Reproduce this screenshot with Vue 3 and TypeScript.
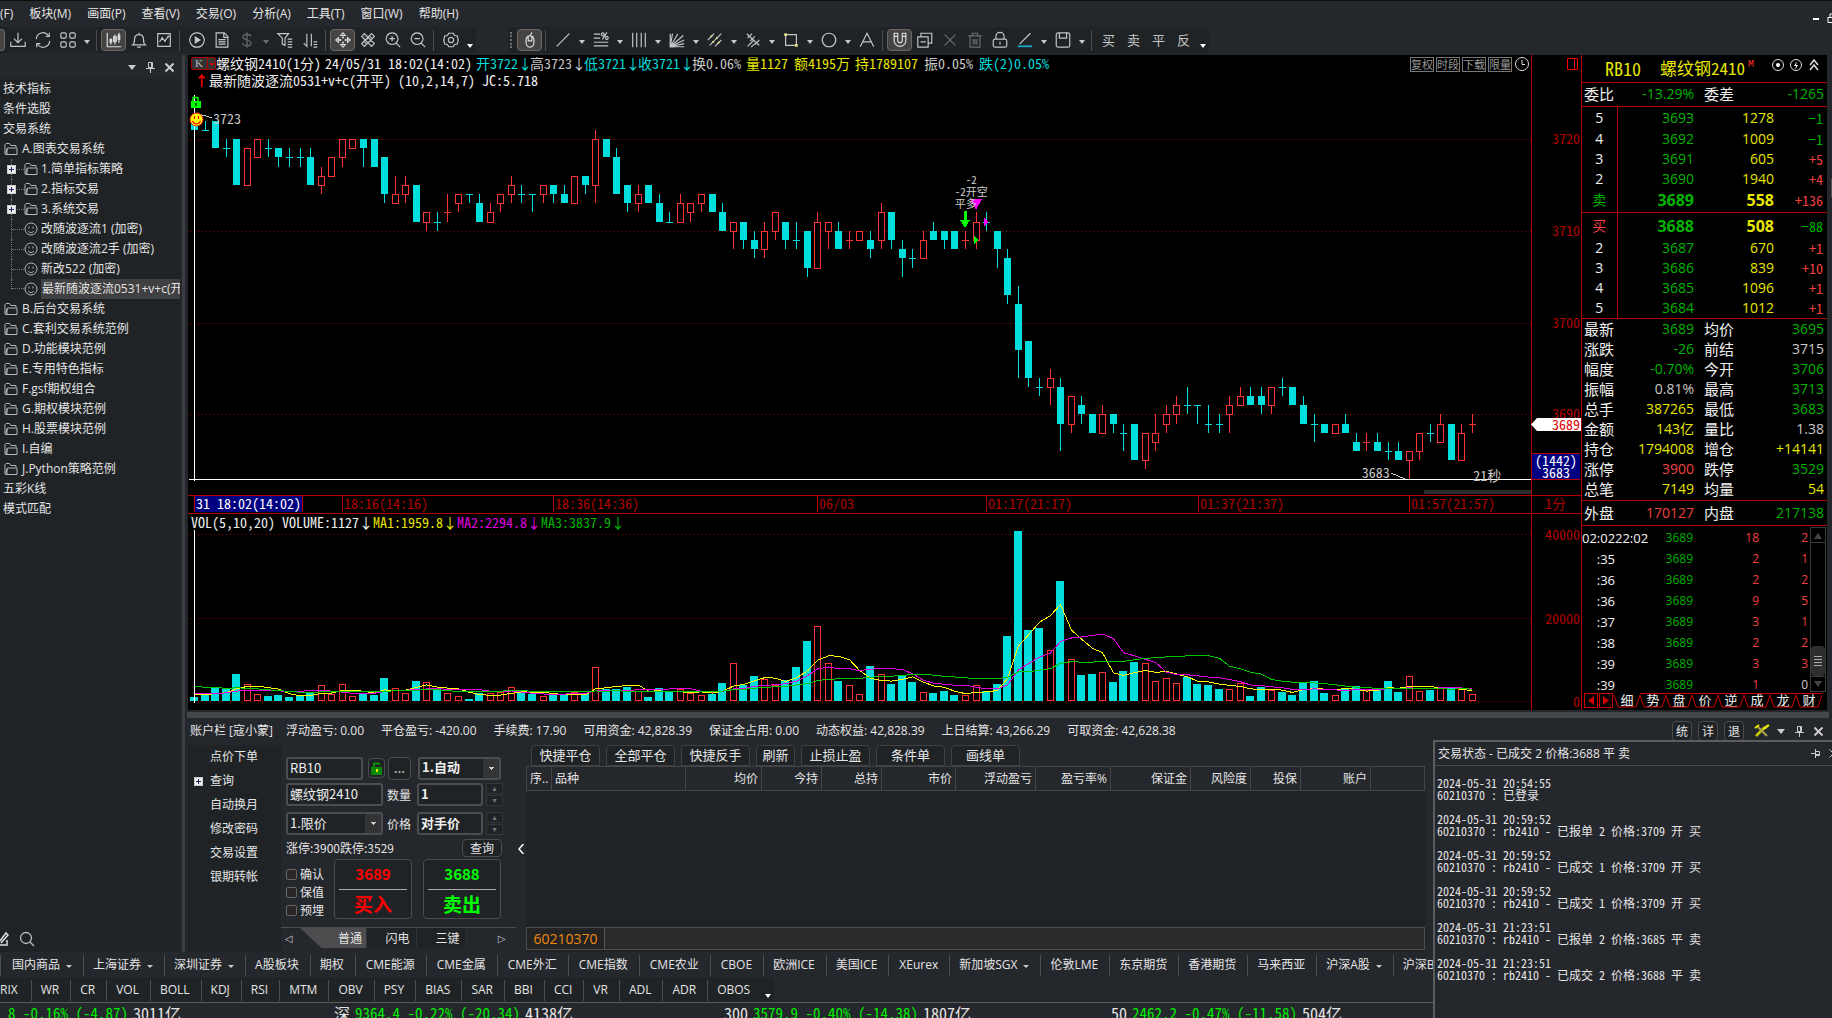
<script setup lang="ts">
import { computed, h, ref } from 'vue'

/* ---------- icons ---------- */
interface Glyph { s?: string; f?: string; a?: string; ac?: string }
const glyphs: Record<string, Glyph> = {
  download: { s: 'M10 2v11M5.500 8.500L10 13l4.500-4.500M2 12v5h16v-5' },
  refresh: { s: 'M2.500 9a7.500 7.500 0 0 1 13.500-4M17 2v4h-4M17.500 11a7.500 7.500 0 0 1-13.500 4M3 18v-4h4' },
  grid: { s: 'M3.500 2h3a1.500 1.500 0 0 1 1.500 1.500v3a1.500 1.500 0 0 1-1.500 1.500h-3a1.500 1.500 0 0 1-1.500-1.500v-3a1.500 1.500 0 0 1 1.500-1.500zM13.500 2h3a1.500 1.500 0 0 1 1.500 1.500v3a1.500 1.500 0 0 1-1.500 1.500h-3a1.500 1.500 0 0 1-1.500-1.500v-3a1.500 1.500 0 0 1 1.500-1.500zM3.500 12h3a1.500 1.500 0 0 1 1.500 1.500v3a1.500 1.500 0 0 1-1.500 1.500h-3a1.500 1.500 0 0 1-1.500-1.500v-3a1.500 1.500 0 0 1 1.500-1.500zM13.500 12h3a1.500 1.500 0 0 1 1.500 1.500v3a1.500 1.500 0 0 1-1.500 1.500h-3a1.500 1.500 0 0 1-1.500-1.500v-3a1.500 1.500 0 0 1 1.500-1.500z' },
  kline: { s: 'M2.500 2v15.500H18M6.500 8v7M11 4v11M15.500 2v11M9.500 6.500h3v5h-3z', f: 'M5 9h3v4H5zM14 4h3v6h-3z' },
  bell: { s: 'M10 2v2M3 15.500h14c-1.500-1-2-3-2-6 0-3.500-2-5.500-5-5.500s-5 2-5 5.500c0 3-.5 5-2 6zM8 18h4' },
  trend: { s: 'M3 3h14v14H3zM5 12l3-4 3 3 4-5', f: 'M7 7h2v2H7zM10 10h2v2h-2zM14 5h2v2h-2z' },
  play: { s: 'M10 2a8 8 0 1 0 .01 0z', f: 'M7.500 5.500v9l7-4.500z' },
  doc: { s: 'M3.500 2h9l4 4v12h-13zM12 2v5h4.500M6 9.500h8M6 12h8M6 14.500h8' },
  dollar: { s: 'M10 1.500v17M14.500 6c-.5-1.500-2-2.300-4.500-2.300S5.500 5 5.500 6.800c0 4 9 2.400 9 6.400 0 2-1.800 3.100-4.500 3.100S5.500 15.200 5 13.500' },
  filter: { s: 'M2 3h12l-4 5v8l-3-1.500V8zM13 9h5M13 12h5M13 15h5M13 18h5' },
  sort: { s: 'M6.500 3v14L3 13.500M11.500 17V3M11.500 3v6M14 12h4M14 15h4M14 18h4' },
  move: { s: 'M10 2L7.500 5h5zM10 18L7.500 15h5zM2 10L5 7.500v5zM18 10L15 7.500v5z', f: 'M9 6h2v2H9zM9 12h2v2H9zM6 9h2v2H6zM12 9h2v2h-2z' },
  hatch: { s: 'M3 6l3-3 11 11-3 3zM17 6l-3-3L3 14l3 3zM6 6l2-2M9 9l2-2M12 12l2-2M8 14l-2-2M14 8l-2-2' },
  zoomin: { s: 'M9 2a6.500 6.500 0 1 0 .01 0zM13.500 13.500L18 18M6 8.500h6M9 5.500v6' },
  zoomout: { s: 'M9 2a6.500 6.500 0 1 0 .01 0zM13.500 13.500L18 18M6 8.500h6' },
  gear: { s: 'M7.500 2.500h5l1.500 2.500 3 .5 1 4.500-1 4.500-3 .5-1.500 2.500h-5L6 15l-3-.5L2 10l1-4.500L6 5zM10 7a3 3 0 1 0 .01 0z' },
  mouse: { s: 'M10 5.500c3 0 4.500 2 4.500 6s-1.500 6.500-4.500 6.500-4.500-2.500-4.500-6.500 1.500-6 4.500-6zM8 6v5h4V6M10 5.500c0-2 2-1.500 2-4' },
  line: { s: 'M3 17L17 3' },
  percent: { s: 'M2 3.500h7M2 8h7M2 12.500h16M2 16.500h16M16.500 1.500l-5 8M12 2a1.500 1.800 0 1 0 .01 0zM16.500 6a1.500 1.800 0 1 0 .01 0z' },
  bars: { s: 'M3 2v16M7.500 2v16M12.500 2v16M17 2v16' },
  fan: { s: 'M2.500 3v14.500H18M2.500 17.500L5 3M2.500 17.500L11 3M2.500 17.500L17 5M2.500 17.500L18 10M2.500 17.500L18 14', f: 'M2 13l5 5H2z' },
  channel: { s: 'M2 10l7-7M4 16L17 3M10 17l7-7', a: 'M7 11h2v2H7zM11 7h2v2h-2zM5 5h2v2H5zM13 12h2v2h-2z', ac: '#e6e08a' },
  pitch: { s: 'M3 3l14 13M4 8l5-5M7 11l5-5M4 17l7-7M8 18l4-4M12 15l5-5' },
  rect: { s: 'M4 4h12v12H4z', a: 'M2.500 2.500h3v3h-3zM14.500 14.500h3v3h-3z', ac: '#e6e08a' },
  circle: { s: 'M10 2.500a7.500 7.500 0 1 0 .01 0z' },
  letter: { s: 'M2.500 17.500L10 2.500l7.500 15M5.500 12h9' },
  magnet: { s: 'M3.500 2.500h4v8a2.500 2.500 0 0 0 5 0v-8h4v8a6.500 6.500 0 0 1-13 0zM3.500 6h4M12.500 6h4' },
  copy: { s: 'M2 6.500h11.500V18H2zM5.500 6.500V2.500h12v11h-4M5 12h6' },
  cross: { s: 'M4 4l12 12M16 4L4 16' },
  trash: { s: 'M2.500 5.500h15M7 5V2.500h6V5M4.500 5.500V18h11V5.500M8 9v6M10 9v6M12 9v6' },
  lock: { s: 'M4.500 9h11a2 2 0 0 1 2 2v5a2 2 0 0 1-2 2h-11a2 2 0 0 1-2-2v-5a2 2 0 0 1 2-2zM5.500 9V6a4.500 4.500 0 0 1 9 0v3M10 12v3' },
  angle: { s: 'M4 14.500L16 2.500', a: 'M2 16h16v2H2z', ac: '#19a9c4' },
  save: { s: 'M4.500 2h11a2 2 0 0 1 2 2v12a2 2 0 0 1-2 2h-11a2 2 0 0 1-2-2V4a2 2 0 0 1 2-2zM6 2v6h8V2' },
}
const Icon = (p: { n: string; size?: number }) => {
  const g = glyphs[p.n]
  const k = p.size ?? 18
  return h('svg', { width: k, height: k, viewBox: '0 0 20 20', 'aria-hidden': 'true' }, [
    g.s ? h('path', { d: g.s, fill: 'none', stroke: 'currentColor', 'stroke-width': 1.3 }) : null,
    g.f ? h('path', { d: g.f, fill: 'currentColor' }) : null,
    g.a ? h('path', { d: g.a, fill: g.ac }) : null,
  ])
}
Icon.props = ['n', 'size']

interface Tool { n?: string; t?: string; c?: boolean; on?: boolean; dim?: boolean; sep?: boolean; low?: boolean }
const sep: Tool = { sep: true }
const tools1: Tool[] = [
  { n: 'download' }, { n: 'refresh' }, { n: 'grid', c: true }, sep,
  { n: 'kline', on: true }, { n: 'bell' }, { n: 'trend' }, sep,
  { n: 'play' }, { n: 'doc' }, { n: 'dollar', c: true, dim: true }, { n: 'filter' }, { n: 'sort' }, sep,
  { n: 'move', on: true }, { n: 'hatch' }, { n: 'zoomin' }, { n: 'zoomout' }, sep,
  { n: 'gear', c: true, low: true },
]
const tools2: Tool[] = [
  { n: 'mouse', on: true }, sep,
  { n: 'line', c: true }, { n: 'percent', c: true }, { n: 'bars', c: true }, { n: 'fan', c: true },
  { n: 'channel', c: true }, { n: 'pitch', c: true }, { n: 'rect', c: true }, { n: 'circle', c: true }, { n: 'letter' }, sep,
  { n: 'magnet', on: true }, { n: 'copy' }, { n: 'cross', dim: true }, { n: 'trash', dim: true }, { n: 'lock' },
  { n: 'angle', c: true }, { n: 'save', c: true }, sep,
  { t: '买' }, { t: '卖' }, { t: '平' }, { t: '反', c: true, low: true },
]
const menus = ['(F)', '板块(M)', '画面(P)', '查看(V)', '交易(O)', '分析(A)', '工具(T)', '窗口(W)', '帮助(H)']

/* ---------- tree ---------- */
interface Node { t: string; k: 'root' | 'dir' | 'sub' | 'leaf'; sel?: boolean }
const tree: Node[] = [
  { t: '技术指标', k: 'root' }, { t: '条件选股', k: 'root' }, { t: '交易系统', k: 'root' },
  { t: 'A.图表交易系统', k: 'dir' },
  { t: '1.简单指标策略', k: 'sub' }, { t: '2.指标交易', k: 'sub' }, { t: '3.系统交易', k: 'sub' },
  { t: '改随波逐流1 (加密)', k: 'leaf' }, { t: '改随波逐流2手 (加密)', k: 'leaf' }, { t: '新改522 (加密)', k: 'leaf' },
  { t: '最新随波逐流0531+v+c(开平)', k: 'leaf', sel: true },
  { t: 'B.后台交易系统', k: 'dir' }, { t: 'C.套利交易系统范例', k: 'dir' }, { t: 'D.功能模块范例', k: 'dir' },
  { t: 'E.专用特色指标', k: 'dir' }, { t: 'F.gsf期权组合', k: 'dir' }, { t: 'G.期权模块范例', k: 'dir' },
  { t: 'H.股票模块范例', k: 'dir' }, { t: 'I.自编', k: 'dir' }, { t: 'J.Python策略范例', k: 'dir' },
  { t: '五彩K线', k: 'root' }, { t: '模式匹配', k: 'root' },
]

/* ---------- price series: r|c, body top, body bottom, high, low (over 3600) ---------- */
const series = `c122,121,123,121 c121,121,122,121 c122,119,122,119 c119,119,120,118 c120,115,120,115 r119,115,119,115 r120,118,120,118 c119,119,120,118
c119,118,119,117 c118,118,119,117 c118,118,119,117 c118,115,119,115 r116,115,117,114 r118,116,118,116 r120,118,120,117 r120,119,120,119
c120,119,120,117 c120,117,120,117 c118,114,118,113 r114,113,116,113 r115,114,116,113 c115,111,115,111 r112,111,112,110 c111,111,112,110
r112,112,114,111 r114,113,114,112 c114,114,114,113 c113,111,114,111 r112,111,113,111 r114,113,114,112 r115,114,116,113 c114,114,115,113
c114,114,114,112 r115,114,115,113 c115,114,115,113 c114,113,115,113 r116,113,116,113 c116,115,116,114 r120,115,121,113 c120,118,120,118
c118,114,119,114 c115,113,115,112 r114,113,115,112 c115,113,115,113 c113,111,114,111 c111,111,112,111 r113,111,114,111 r113,112,113,111
r114,113,114,112 c114,112,114,112 c112,110,113,110 r111,110,111,108 c111,109,111,108 c109,108,110,107 r110,108,111,107 r112,110,112,109
c111,109,111,108 c109,109,111,108 c110,106,110,105 r111,106,112,106 r111,110,111,108 c110,108,111,108 r109,109,110,108 r110,109,110,109
c109,108,110,107 r112,109,113,108 c112,109,112,108 c108,107,109,105 c107,107,108,106 r109,107,110,107 c110,109,111,109 c110,109,110,108
c110,108,110,108 r109,109,110,108 r111,109,112,108 c111,111,112,110 c110,108,110,106 c107,103,108,102 c102,97,104,94 c98,94,98,93
c93,93,94,92 r94,93,95,91 c93,89,94,86 r92,89,92,88 c91,90,92,89 c90,88,90,88 r90,88,91,88 c90,89,90,88
c88,88,89,86 c89,85,89,85 r88,85,88,84 r88,87,90,86 r90,89,91,88 r91,90,92,89 c91,91,93,90 c91,91,91,89
c89,89,91,88 c89,89,90,88 r91,90,92,88 r92,91,93,91 c92,91,93,91 c92,91,93,90 r93,91,93,90 c93,93,94,92
c93,91,93,91 c91,89,92,89 c89,89,90,87 c89,88,89,88 r89,88,89,88 c89,88,90,88 c87,86,88,86 r87,87,88,86
c87,86,88,86 c86,86,87,85 c86,85,87,85 r86,85,86,83 r88,86,88,85 c88,88,89,87 r89,87,90,87 c89,85,89,85
r88,85,89,85 r89,89,90,88`
const cx = (i: number) => Math.round(6 + 10.562 * i)
const py = (p: number) => Math.round(84 + (120 - p) * 9.18)
const candles = series.trim().split(/\s+/).map((s) => {
  const [t, b, hi, lo] = s.slice(1).split(',').map(Number)
  return { up: s[0] === 'r', t: py(t), b: py(b), hi: py(hi), lo: py(lo) }
}).map((k, i) => ({ ...k, x: cx(i) }))
const vols = [4, 6, 13, 13, 27, 17, 7, 5, 6, 4, 6, 9, 16, 7, 17, 5, 7, 6, 23, 13, 8, 20, 19, 12, 8, 5, 2, 8, 8, 9, 14, 9, 7, 5, 6, 6, 9, 8, 34, 12,
  12, 14, 10, 4, 13, 9, 12, 8, 6, 7, 18, 38, 16, 25, 22, 16, 21, 34, 60, 75, 38, 20, 16, 7, 35, 27, 17, 25, 19, 9, 8, 10, 6, 6, 16, 10, 17, 65, 170,
  71, 73, 51, 120, 42, 26, 27, 29, 19, 30, 39, 38, 20, 23, 18, 24, 17, 16, 12, 12, 18, 5, 14, 11, 9, 6, 19, 20, 8, 6, 12, 15, 11, 11, 20, 9, 25, 10,
  11, 13, 13, 12, 7]
const history = [...Array(10).fill(22), ...Array(5).fill(9), ...Array(4).fill(8)]
const average = (n: number) => {
  const all = [...history, ...vols]
  return vols.map((_, i) => {
    const end = i + history.length + 1
    const m = all.slice(end - n, end).reduce((a, b) => a + b, 0) / n
    return `${cx(i) + 0.5},${(187.5 - m).toFixed(1)}`
  }).join(' ')
}
const averages = computed(() => [
  { c: '#ffff00', p: average(5) }, { c: '#e000e0', p: average(10) }, { c: '#00c800', p: average(20) },
])

const quoteLine = [
  { t: '螺纹钢2410(1分)', c: 'w', w: 109 }, { t: '24/05/31 18:02(14:02)', c: 'w', w: 151 },
  { t: '开3722↓', c: 'c', w: 54 }, { t: '高3723↓', c: 'g', w: 54 }, { t: '低3721↓', c: 'c', w: 54 }, { t: '收3721↓', c: 'c', w: 54 },
  { t: '换0.06%', c: 'g', w: 54 }, { t: '量1127', c: 'y', w: 48 }, { t: '额4195万', c: 'y', w: 61 }, { t: '持1789107', c: 'y', w: 69 },
  { t: '振0.05%', c: 'g', w: 55 }, { t: '跌(2)0.05%', c: 'c', w: 70 },
]
const volLine = [
  { t: 'VOL(5,10,20)', c: 'w', w: 91 }, { t: 'VOLUME:1127↓', c: 'w', w: 91 }, { t: 'MA1:1959.8↓', c: 'y', w: 84 },
  { t: 'MA2:2294.8↓', c: 'm', w: 84 }, { t: 'MA3:3837.9↓', c: 'n', w: 84 },
]
const times = ['18:16(14:16)', '18:36(14:36)', '06/03', '01:17(21:17)', '01:37(21:37)', '01:57(21:57)']

/* ---------- quote panel ---------- */
const asks = [['5', '3693', '1278', '−1'], ['4', '3692', '1009', '−1'], ['3', '3691', '605', '+5'], ['2', '3690', '1940', '+4'], ['卖', '3689', '558', '+136']]
const bids = [['买', '3688', '508', '−88'], ['2', '3687', '670', '+1'], ['3', '3686', '839', '+10'], ['4', '3685', '1096', '+1'], ['5', '3684', '1012', '+1']]
const stats = [
  ['最新', '3689', 'n', '均价', '3695', 'n'], ['涨跌', '-26', 'n', '前结', '3715', 'g'], ['幅度', '-0.70%', 'n', '今开', '3706', 'n'],
  ['振幅', '0.81%', 'g', '最高', '3713', 'n'], ['总手', '387265', 'y', '最低', '3683', 'n'], ['金额', '143亿', 'y', '量比', '1.38', 'g'],
  ['持仓', '1794008', 'y', '增仓', '+14141', 'y'], ['涨停', '3900', 'r', '跌停', '3529', 'n'], ['总笔', '7149', 'y', '均量', '54', 'y'],
]
const ticks = [['02:02', '22:02', '18', '2'], [':35', '', '2', '1'], [':36', '', '2', '2'], [':36', '', '9', '5'], [':37', '', '3', '1'], [':38', '', '2', '2'], [':39', '', '3', '3'], [':39', '', '1', '0']]
const quoteTabs = ['细', '势', '盘', '价', '逆', '成', '龙', '财']

/* ---------- account dock ---------- */
const account = ['浮动盈亏: 0.00', '平仓盈亏: -420.00', '手续费: 17.90', '可用资金: 42,828.39', '保证金占用: 0.00', '动态权益: 42,828.39', '上日结算: 43,266.29', '可取资金: 42,628.38']
const dockMenu = ['点价下单', '查询', '自动换月', '修改密码', '交易设置', '银期转帐']
const actions = ['快捷平仓', '全部平仓', '快捷反手', '刷新', '止损止盈', '条件单', '画线单']
const columns = [
  { t: '序..', w: 25 }, { t: '品种', w: 134 }, { t: '均价', w: 76 }, { t: '今持', w: 60 }, { t: '总持', w: 60 }, { t: '市价', w: 74 }, { t: '浮动盈亏', w: 80 },
  { t: '盈亏率%', w: 75 }, { t: '保证金', w: 80 }, { t: '风险度', w: 60 }, { t: '投保', w: 50 }, { t: '账户', w: 70 },
]
const code = ref('RB10')
const contract = ref('螺纹钢2410')
const qty = ref('1')
const price = ref('对手价')
const log = [
  ['2024-05-31 20:54:55', '60210370 : 已登录'],
  ['2024-05-31 20:59:52', '60210370 : rb2410 - 已报单 2 价格:3709 开 买'],
  ['2024-05-31 20:59:52', '60210370 : rb2410 - 已成交 1 价格:3709 开 买'],
  ['2024-05-31 20:59:52', '60210370 : rb2410 - 已成交 1 价格:3709 开 买'],
  ['2024-05-31 21:23:51', '60210370 : rb2410 - 已报单 2 价格:3685 平 卖'],
  ['2024-05-31 21:23:51', '60210370 : rb2410 - 已成交 2 价格:3688 平 卖'],
]
const markets = ['国内商品▾', '上海证券▾', '深圳证券▾', 'A股板块', '期权', 'CME能源', 'CME金属', 'CME外汇', 'CME指数', 'CME农业', 'CBOE', '欧洲ICE', '美国ICE', 'XEurex', '新加坡SGX▾', '伦敦LME', '东京期货', '香港期货', '马来西亚', '沪深A股▾', '沪深B股']
const indicators = ['RIX', 'WR', 'CR', 'VOL', 'BOLL', 'KDJ', 'RSI', 'MTM', 'OBV', 'PSY', 'BIAS', 'SAR', 'BBI', 'CCI', 'VR', 'ADL', 'ADR', 'OBOS']
const indexes = [
  { n: '', v: '8 -0.16% (-4.87)', a: '3011亿' }, { n: '深', v: '9364.4 -0.22% (-20.34)', a: '4138亿' },
  { n: '300', v: '3579.9 -0.40% (-14.38)', a: '1807亿' }, { n: '50', v: '2462.2 -0.47% (-11.58)', a: '504亿' },
]
</script>

<template>
  <div class="app">
    <header class="menubar">
      <nav><a v-for="m in menus" :key="m" href="#">{{ m }}</a></nav>
      <div class="winctl">
        <button aria-label="最小化"><svg width="6" height="3"><rect y="1" width="6" height="2" fill="#fff" /></svg></button>
        <button aria-label="还原"><svg width="6" height="10"><path d="M1 4.500h8M1 4v5.500h8M3 4V1h5" fill="none" stroke="#fff" /></svg></button>
      </div>
    </header>

    <div class="toolbar">
      <div class="strip">
        <span class="stub"></span>
        <template v-for="(t, i) in tools1" :key="i">
          <i v-if="t.sep" class="sep"></i>
          <button v-else class="tool" :class="{ on: t.on, dim: t.dim }" :aria-label="t.n"><Icon :n="t.n!" /></button>
          <i v-if="t.c" class="caret" :class="{ low: t.low, dim: t.dim }"></i>
        </template>
      </div>
      <div class="strip second">
        <i class="grip"></i>
        <template v-for="(t, i) in tools2" :key="i">
          <i v-if="t.sep" class="sep"></i>
          <button v-else class="tool" :class="{ on: t.on, dim: t.dim }" :aria-label="t.n ?? t.t"><Icon v-if="t.n" :n="t.n" /><template v-else>{{ t.t }}</template></button>
          <i v-if="t.c" class="caret" :class="{ low: t.low }"></i>
        </template>
      </div>
    </div>

    <div class="body">
      <aside class="side">
        <div class="side-head">
          <i class="tri"></i>
          <svg class="pin" width="9" height="11"><path d="M2.500 .5h4v5h-4zM0 6.500h9M4.500 7v4M5.500 1v5" /></svg>
          <svg class="pin" width="9" height="9"><path d="M.5 .5l8 8M8.500 .5l-8 8" stroke-width="2" /></svg>
        </div>
        <ul class="tree">
          <li v-for="(n, i) in tree" :key="i" :class="n.k">
            <i v-if="n.k === 'leaf' || n.k === 'sub'" class="branch" :class="{ last: n.sel }"></i>
            <i v-if="n.k === 'sub'" class="plus"></i>
            <svg v-if="n.k === 'dir' || n.k === 'sub'" class="ico" width="14" height="14"><path d="M1 12V2.500L2 1.500h3.500l1.500 2h5v2M1.500 12.500L3.500 6h9.500v6.500zM3 12.500V6.500" /></svg>
            <svg v-else-if="n.k === 'leaf'" class="ico" width="14" height="14"><circle cx="7" cy="7" r="6" /><path d="M5 4.500v2M9 4.500v2M4 9c1.500 2 4.500 2 6 0" /></svg>
            <span :class="{ picked: n.sel }">{{ n.t }}</span>
          </li>
        </ul>
        <div class="side-foot">
          <svg width="9" height="16"><path d="M0 10L6 2l2 2-7 8M0 14h7V9" fill="none" stroke="#ddd" stroke-width="1.500" /></svg>
          <svg width="16" height="16"><circle cx="7" cy="7" r="5.500" fill="none" stroke="#bbb" stroke-width="1.300" /><path d="M11 11l4 4" stroke="#bbb" stroke-width="1.300" /></svg>
        </div>
      </aside>
      <i class="vbar"></i>

      <section class="center">
        <div class="top">
          <div class="chart">
            <div class="price">
              <div class="plot">
                <svg class="canvas" height="440" viewBox="0 0 1343 440" preserveAspectRatio="none" shape-rendering="crispEdges">
                  <line v-for="p in [120, 110, 100, 90]" :key="p" class="grid" x1="2" x2="1343" :y1="py(p) + 0.5" :y2="py(p) + 0.5" />
                  <g v-for="(k, i) in candles" :key="i" :fill="k.up ? '#f33' : '#00dede'">
                    <rect v-if="k.hi < k.t" :x="k.x" :y="k.hi" width="1" :height="k.t - k.hi" />
                    <rect v-if="k.lo > k.b" :x="k.x" :y="k.b" width="1" :height="k.lo - k.b" />
                    <rect v-if="k.t === k.b" :x="k.x - 3" :y="k.t" width="7" height="1" />
                    <rect v-else-if="k.up" :x="k.x - 2.5" :y="k.t + 0.5" width="6" :height="k.b - k.t" fill="#000" stroke="#f33" />
                    <rect v-else :x="k.x - 3" :y="k.t" width="7" :height="k.b - k.t" />
                  </g>
                  <path d="M8 58L24 63M1203 418L1217 424" stroke="#ccc" fill="none" />
                  <rect x="6" y="40" width="1" height="386" fill="#fff" />
                  <rect x="1" y="424" width="1342" height="1" fill="#fff" />
                  <rect x="1236" y="435" width="107" height="4" fill="#2b2b2b" />
                  <path d="M776 156h3v9h3l-5 8-5-8h4zM786 181l5 4-5 4z" fill="#0f0" />
                  <path d="M782 144h12l-6 11zM796 163l5 4-5 4z" fill="#f0f" />
                </svg>
                <svg class="marks" width="18" height="38"><path d="M5 9V3.500h5V9" fill="none" stroke="#0f0" stroke-width="1.500" /><rect x="3" y="7" width="10" height="7" fill="#0f0" /><rect x="7" y="9" width="2" height="3" fill="#060" /><circle cx="8.500" cy="25.500" r="6.500" fill="#ff0" stroke="#f22" /><path d="M6.500 22v3M10.500 22v3M4.500 27c2 4 6 4 8 0" fill="none" stroke="#e00" stroke-width="1.200" /></svg>
                <div class="head">
                  <button class="kbtn">K<i></i></button>
                  <span v-for="q in quoteLine" :key="q.t" :class="q.c" :style="{ width: q.w + 'px' }">{{ q.t }}</span>
                </div>
                <div class="sub-head"><b>↑</b>最新随波逐流0531+v+c(开平) (10,2,14,7) JC:5.718</div>
                <div class="tags">
                  <button>复权</button><button>时段</button><button>下载</button><button>限量</button>
                  <svg width="16" height="16"><circle cx="8" cy="8" r="6.500" fill="none" stroke="#ddd" /><path d="M8 4v4.500h3" fill="none" stroke="#ddd" /></svg>
                </div>
                <span class="lab hi">3723</span>
                <span class="lab lo">3683</span>
                <span class="lab sec">21秒</span>
                <div class="signal"><span>-2</span><span>-2开空</span><span>平多</span></div>
              </div>
              <div class="axis">
                <svg class="win" width="12" height="13"><path d="M.5 .5h10v11h-10zM7.500 1v11" fill="none" stroke="red" /></svg>
                <span class="tick" style="top: 83px">3720</span>
                <span class="tick" style="top: 175px">3710</span>
                <span class="tick" style="top: 267px">3700</span>
                <span class="tick" style="top: 358px">3690</span>
                <span class="now">3689</span>
                <span class="cur"><span>(1442)</span><span>3683</span></span>
              </div>
            </div>
            <div class="timeline">
              <div class="scale">
                <span class="at"><b>31 18:02(14:02)</b></span>
                <span v-for="t in times" :key="t">{{ t }}</span>
              </div>
              <div class="unit">1分</div>
            </div>
            <div class="volume">
              <div class="plot">
                <svg class="canvas" height="196" viewBox="0 0 1343 196" preserveAspectRatio="none" shape-rendering="crispEdges">
                  <line v-for="y in [20.5, 104.5, 187.5]" :key="y" class="grid" x1="2" x2="1343" :y1="y" :y2="y" />
                  <template v-for="(v, i) in vols" :key="i">
                    <rect v-if="candles[i].up" :x="cx(i) - 2.5" :y="187.5 - v" width="6" :height="v - 1" fill="#000" stroke="#f33" />
                    <rect v-else :x="cx(i) - 4" :y="187 - v" width="8" :height="v" fill="#00dede" />
                  </template>
                  <polyline v-for="a in averages" :key="a.c" :points="a.p" fill="none" :stroke="a.c" />
                  <rect x="6" y="16" width="1" height="173" fill="#fff" />
                </svg>
                <div class="vol-head"><span v-for="q in volLine" :key="q.t" :class="q.c" :style="{ width: q.w + 'px' }">{{ q.t }}</span></div>
              </div>
              <div class="axis">
                <span class="tick" style="top: 20px">40000</span>
                <span class="tick" style="top: 104px">20000</span>
                <span class="tick" style="top: 187px">0</span>
              </div>
            </div>
          </div>

          <div class="quote">
            <div class="title">
              <span>RB10</span><span class="nm">螺纹钢2410</span><sup>M</sup>
              <svg width="56" height="16"><g fill="none" stroke="#ddd"><circle cx="8" cy="8" r="5.500" /><circle cx="26" cy="8" r="5.500" /><path d="M40 8l4-5 4 5M40 13l4-5 4 5" stroke-width="1.500" /></g><circle cx="8" cy="8" r="2" fill="#fff" /><path d="M27 4l-3 5h2l-1 4 3-5h-2z" fill="#fff" /></svg>
            </div>
            <table class="stats line"><tbody><tr><th>委比</th><td class="n">-13.29%</td><th>委差</th><td class="n">-1265</td></tr></tbody></table>
            <table class="book"><tbody>
              <tr v-for="r in asks" :key="r[0]" :class="{ best: r[0] === '卖' }"><th class="n">{{ r[0] }}</th><td class="n">{{ r[1] }}</td><td class="y">{{ r[2] }}</td><td class="d" :class="r[3][0] === '+' ? 'r' : 'n'">{{ r[3] }}</td></tr>
            </tbody></table>
            <table class="book buy"><tbody>
              <tr v-for="r in bids" :key="r[0]" :class="{ best: r[0] === '买' }"><th class="r">{{ r[0] }}</th><td class="n">{{ r[1] }}</td><td class="y">{{ r[2] }}</td><td class="d" :class="r[3][0] === '+' ? 'r' : 'n'">{{ r[3] }}</td></tr>
            </tbody></table>
            <table class="stats"><tbody>
              <tr v-for="s in stats" :key="s[0]"><th>{{ s[0] }}</th><td :class="s[2]">{{ s[1] }}</td><th>{{ s[3] }}</th><td :class="s[5]">{{ s[4] }}</td></tr>
            </tbody></table>
            <table class="stats line both"><tbody><tr><th>外盘</th><td class="r">170127</td><th>内盘</th><td class="n">217138</td></tr></tbody></table>
            <div class="tape">
              <table><tbody>
                <tr v-for="(t, i) in ticks" :key="i"><th>{{ t[0] }}</th><th>{{ t[1] }}</th><td class="n p">3689</td><td class="r">{{ t[2] }}</td><td :class="t[3] === '0' ? 'g' : 'r'">{{ t[3] }}</td></tr>
              </tbody></table>
              <div class="scroll"><i class="up"></i><i class="thumb"></i><i class="down"></i></div>
            </div>
            <div class="qtabs">
              <button class="ar" aria-label="向左"><svg width="6" height="9"><path d="M6 0v9L0 4.500z" fill="#c00" /></svg></button>
              <button class="ar" aria-label="向右"><svg width="6" height="9"><path d="M0 0v9l6-4.500z" fill="#c00" /></svg></button>
              <button v-for="(t, i) in quoteTabs" :key="t" class="qt">
                <svg width="30" height="16"><path :d="i ? 'M2 .5h26M2 2l4 12h18L28 2' : 'M2 2l4 12h18L28 2'" fill="none" stroke="#c00" /></svg>{{ t }}
              </button>
            </div>
          </div>
        </div>

        <i class="hbar"></i>
        <div class="account">
          <span class="name">账户栏 [寇小蒙]</span>
          <span v-for="a in account" :key="a">{{ a }}</span>
          <div class="acts">
            <button>统</button><button>详</button><button>退</button>
            <svg width="16" height="14"><path d="M2 12l9-9" stroke="#cc0" stroke-width="2.500" /><path d="M10 4l4-3M4 3l9 9" stroke="#aaa050" stroke-width="2" /><path d="M1 4l4-3M10 5l5-4" stroke="#ee0" stroke-width="2" /></svg>
            <i class="tri"></i>
            <svg class="pin" width="9" height="11"><path d="M2.500 .5h4v5h-4zM0 6.500h9M4.500 7v4M5.500 1v5" /></svg>
            <svg class="pin" width="9" height="9"><path d="M.5 .5l8 8M8.500 .5l-8 8" stroke-width="2" /></svg>
          </div>
        </div>

        <div class="dock">
          <ul class="dmenu"><li v-for="d in dockMenu" :key="d"><i v-if="d === '查询'" class="plus"></i><a href="#">{{ d }}</a></li></ul>
          <form class="order" @submit.prevent>
            <div class="fields">
              <div class="row">
                <input v-model="code" class="code" aria-label="合约代码">
                <button type="button" class="lk" aria-label="锁定"><svg width="14" height="16"><path d="M4 7V3.500h5V5" fill="none" stroke="#0a0" stroke-width="1.500" /><rect x="1" y="7" width="11" height="8" fill="#0a8a0a" /><rect x="6" y="9" width="2" height="3" fill="#ee0" /></svg></button>
                <button type="button" class="more">...</button>
                <span class="sel auto"><select aria-label="开平"><option>1.自动</option></select></span>
              </div>
              <div class="row">
                <input v-model="contract" class="wide" aria-label="合约名称">
                <label for="qty">数量</label><input id="qty" v-model="qty" class="num bold">
                <span class="spin"><button type="button" aria-label="增加">▴</button><button type="button" aria-label="减少">▾</button></span>
              </div>
              <div class="row">
                <span class="sel wide"><select aria-label="委托类型"><option>1.限价</option></select></span>
                <label for="prc">价格</label><input id="prc" v-model="price" class="num bold">
                <span class="spin"><button type="button" aria-label="加价">▴</button><button type="button" aria-label="减价">▾</button></span>
              </div>
              <div class="row limits"><span>涨停:3900跌停:3529</span><button type="button">查询</button></div>
              <div class="row trade">
                <div class="checks">
                  <label><input type="checkbox">确认</label><label><input type="checkbox">保值</label><label><input type="checkbox">预埋</label>
                </div>
                <button type="button" class="deal red"><b>3689</b><i></i><strong>买入</strong></button>
                <button type="button" class="deal green"><b>3688</b><i></i><strong>卖出</strong></button>
              </div>
            </div>
            <div class="otabs">
              <button type="button" class="nav" aria-label="前一页">◁</button>
              <button type="button" class="ot act">普通</button><button type="button" class="ot">闪电</button><button type="button" class="ot">三键</button>
              <button type="button" class="nav end" aria-label="后一页">▷</button>
            </div>
          </form>
          <button class="fold" aria-label="收起"><svg width="6" height="10"><path d="M5.500 0L1 5l4.500 5" fill="none" stroke="#fff" stroke-width="1.500" /></svg></button>
          <div class="positions">
            <div class="pbtns"><button v-for="a in actions" :key="a" :class="{ short: a === '刷新' }">{{ a }}</button></div>
            <table>
              <colgroup><col v-for="c in columns" :key="c.t" :style="{ width: c.w + 'px' }"><col></colgroup>
              <thead><tr><th v-for="c in columns" :key="c.t">{{ c.t }}</th><th></th></tr></thead>
            </table>
            <div class="blank"></div>
            <div class="acct"><button>60210370</button></div>
          </div>
        </div>
      </section>
      <i class="edge"></i>
    </div>

    <nav class="markets">
      <a v-for="m in markets" :key="m" href="#" :class="{ latin: /^[A-Z]{2}/.test(m) }">{{ m.replace('▾', '') }}<i v-if="m.endsWith('▾')"></i></a>
    </nav>
    <nav class="markets inds"><div><a v-for="m in indicators" :key="m" href="#">{{ m }}</a><i class="caret low"></i></div></nav>
    <footer class="indexes">
      <div v-for="x in indexes" :key="x.n"><span v-if="x.n">{{ x.n }}</span><em>{{ x.v }}</em><span>{{ x.a }}</span></div>
    </footer>

    <section class="popup">
      <h2><span>交易状态 - 已成交 2 价格:3688 平 卖</span>
        <svg class="pin" width="9" height="9"><path d="M4.500 2.500h4v4h-4zM4.500 0v9M0 4.500h4M5 5.500h4" /></svg>
        <svg class="pin" width="3" height="9"><path d="M.5 .5l8 8M.5 8.500l8-8" /></svg>
      </h2>
      <div class="log"><p v-for="(l, i) in log" :key="i">{{ l[0] }}<br>{{ l[1] }}</p></div>
    </section>
  </div>
</template>

<style>
body { background: #24272c; }
</style>

<style scoped>
* { box-sizing: border-box; }
.app {
  position: relative; display: flex; flex-direction: column; height: 100vh; overflow: hidden;
  background: #24272c; color: #e4e4e4; font: 12px/16px "Open Sans", "Noto Sans CJK SC", sans-serif; white-space: nowrap;
  --dark: #1f2326; --line: #434446; --red: #b40000;
  --song: "Noto Sans Mono CJK SC", "Liberation Mono", "Noto Sans CJK SC", monospace;
}
button { padding: 0; border: 0; background: none; color: inherit; font: inherit; }
a { color: inherit; text-decoration: none; }
ul, p, h2 { margin: 0; padding: 0; list-style: none; font-weight: 400; }
table { border-collapse: collapse; border-spacing: 0; }
th, td { padding: 0; font-weight: 400; }
i { font-style: normal; }
.w { color: #f0f0f0; } .c { color: #00dede; } .g { color: #c8c8c8; } .y { color: #e6e600; }
.m { color: #e000e0; } .n { color: #00b400; } .r { color: #f04040; }

.menubar { display: flex; justify-content: space-between; height: 27px; border-top: 1px solid #0c0c0c; }
.menubar nav { display: flex; gap: 16px; padding-top: 5px; }
.winctl { display: flex; gap: 8px; align-items: center; padding-top: 8px; overflow: hidden; }
.winctl button { display: flex; }
.winctl button:last-child { width: 5px; overflow: hidden; }

.toolbar { display: flex; gap: 32px; height: 28px; }
.strip { display: flex; align-items: center; height: 26px; background: var(--dark); border-radius: 0 4px 4px 0; }
.second { border-radius: 4px; }
.stub { width: 5px; height: 22px; border: 1px solid #6b6a69; border-left: 0; border-radius: 0 4px 4px 0; background: #464443; }
.tool { display: flex; align-items: center; justify-content: center; width: 25px; height: 22px; color: #c4c6c8; font-size: 13px; }
.on { background: #464443; border: 1px solid #6b6a69; border-radius: 4px; color: #dcdcdc; }
.dim { color: #6a6c6e; }
.sep { width: 1px; height: 21px; margin: 0 4px 0 3px; background: #4b4d50; }
.caret { width: 13px; color: #c8c8c8; }
.caret::after { content: ""; display: block; margin: 3px auto 0 4px; width: 0; border: 3px solid transparent; border-top: 4px solid currentColor; border-bottom: 0; }
.caret.dim { color: #6a6c6e; }
.caret.low::after { margin-top: 12px; border-top-color: #fff; }
.grip { width: 3px; height: 16px; margin: 0 4px 0 2px; border-left: 2px dotted #6d7073; }

.body { position: relative; display: flex; flex: 1; min-height: 0; }
.side { display: flex; flex-direction: column; width: 180px; background: var(--dark); }
.side-head { display: flex; align-items: center; justify-content: flex-end; gap: 10px; height: 24px; padding-right: 6px; background: #24272c; }
.tri { border: 4px solid transparent; border-top: 5px solid #ccc; border-bottom: 0; }
.pin { fill: none; stroke: #ccc; }
.tree { flex: 1; }
.tree li { position: relative; display: flex; align-items: center; height: 20px; padding-left: 3px; overflow: hidden; }
.tree .dir { padding-left: 4px; }
.tree .sub, .tree .leaf { padding-left: 24px; }
.ico { flex: none; margin-right: 3px; fill: none; stroke: #b4b6b8; }
.dir .ico { margin-right: 4px; }
.tree .picked { flex: 1; overflow: hidden; background: #403f41; line-height: 20px; padding-left: 1px; }
.branch { position: absolute; left: 11px; top: 0; width: 12px; height: 20px; border-left: 1px dotted #777; }
.branch.last { height: 10px; }
.branch::after { content: ""; position: absolute; left: 0; top: 10px; width: 12px; border-top: 1px dotted #777; }
.branch.last::after { top: 9px; }
.plus { width: 9px; height: 9px; background: linear-gradient(#226, #226) center / 5px 1px no-repeat, linear-gradient(#226, #226) center / 1px 5px no-repeat, #eee; border: 1px solid #ccc; }
.tree .plus { position: absolute; left: 7px; top: 6px; }
.side-foot { display: flex; gap: 10px; height: 21px; }
.vbar { width: 3px; margin: 0 3px 0 2px; background: #3b3d40; }
.edge { position: absolute; right: 0; top: 124px; width: 1px; height: 18px; background: #555; }

.center { display: flex; flex-direction: column; flex: 1; min-width: 0; }
.top { display: flex; padding-right: 5px; }
.chart { flex: 1; min-width: 0; background: #000; font: 14px/16px var(--song); color: var(--red); }
.price, .volume, .timeline { display: flex; }
.plot { position: relative; flex: 1; min-width: 0; }
.canvas { display: block; width: 100%; }
.grid { stroke: #a00000; stroke-dasharray: 1 3; }
.head, .sub-head, .vol-head { position: absolute; left: 3px; top: 0; display: flex; }
.head span, .vol-head span { flex: none; }
.sub-head { top: 17px; left: 6px; color: #f0f0f0; }
.sub-head b { width: 15px; text-align: center; color: red; }
.kbtn { display: flex; align-items: center; width: 25px; height: 13px; margin: 2px 0 0; padding-left: 3px; border: 1px solid #a00; border-radius: 2px; background: #333; color: #bbb; font: 11px/11px "Liberation Serif", serif; }
.kbtn i { margin-left: 4px; height: 11px; border-left: 1px solid #a00; }
.kbtn i::after { content: ""; display: block; margin: 5px 0 0 1px; border: 3px solid transparent; border-top-color: #c00; border-bottom: 0; }
.tags { position: absolute; right: 1px; top: 1px; display: flex; align-items: center; gap: 2px; }
.tags button { width: 24px; height: 15px; border: 1px solid #777; color: #999; font: 11px/12px "Noto Sans CJK SC", sans-serif; }
.marks { position: absolute; left: 0; top: 39px; }
.lab { position: absolute; color: #c8c8c8; }
.hi { left: 25px; top: 55px; }
.lo { left: 87.4%; top: 409px; }
.sec { left: 95.7%; top: 412px; }
.signal { position: absolute; left: 57.1%; top: 118px; display: flex; flex-direction: column; color: #ccc; font-size: 11px; line-height: 12px; }
.signal span:first-child { padding-left: 11px; }
.axis { position: relative; width: 50px; border-left: 1px solid var(--red); }
.tick { position: absolute; right: 1px; transform: translateY(-50%); }
.win { position: absolute; right: 2px; top: 3px; }
.now { position: absolute; right: 0; top: 363px; width: 50px; height: 13px; padding-right: 1px; background: #fff; color: #e00000; line-height: 12px; text-align: right; clip-path: polygon(0 50%, 12% 0, 100% 0, 100% 100%, 12% 100%); }
.cur { position: absolute; left: 0; top: 398px; display: flex; flex-direction: column; width: 48px; height: 27px; background: #000080; border: solid var(--red); border-width: 1px 0; color: #fff; line-height: 12px; text-align: center; }
.timeline { height: 19px; border: solid var(--red); border-width: 1px 0; line-height: 15px; }
.scale { display: grid; flex: 1; grid-template-columns: 154fr 211fr 264fr 169fr 212fr 211fr 122fr; }
.scale span { border-left: 1px solid var(--red); height: 16px; padding-left: 1px; min-width: 0; }
.scale .at { border: 0; padding-left: 6px; }
.at b { display: inline-block; height: 16px; padding: 0 1px; border: solid var(--red); border-width: 0 1px; background: #000080; color: #fff; font-weight: 400; }
.unit { width: 50px; height: 16px; border-left: 1px solid var(--red); text-align: center; padding-right: 2px; }

.quote { width: 246px; background: #000; border-left: 1px solid var(--red); font: 14px/20px "Open Sans", "Noto Sans CJK SC", sans-serif; }
.quote table { width: 100%; table-layout: fixed; }
.title { display: flex; height: 28px; padding: 3px 0 0 23px; border-bottom: 1px solid var(--red); color: #e6e600; font: 18px/20px var(--song); }
.title .nm { margin-left: 19px; font-size: 17px; }
.title sup { width: 9px; margin-left: 3px; color: #f33; font: 10px/14px "Liberation Mono", monospace; }
.title svg { margin-left: 13px; margin-top: -1px; }
.stats th { width: 46px; padding-left: 2px; text-align: left; font: 15px/20px "Noto Sans CJK SC", sans-serif; color: #f0f0f0; }
.stats th:first-child + td { width: 66px; }
.stats th:nth-child(3) { width: 56px; padding-left: 10px; }
.stats td { text-align: right; }
.stats td:last-child { padding-right: 3px; }
.stats.line { border-bottom: 1px solid var(--red); }
.stats.line tr { height: 23px; }
.stats.both { border-top: 1px solid var(--red); margin-top: 1px; }
.stats.both tr { height: 25px; }
.book { border-bottom: 1px solid var(--red); }
.book tr { height: 20px; }
.book tr:first-child { height: 22px; }
.book .best { height: 24px; }
.book.buy .best { height: 25px; }
.book.buy tr:last-child { height: 19px; }
.book tr.best td { font-weight: 700; font-size: 16px; }
.book th { width: 35px; border-right: 1px solid var(--red); color: #f0f0f0; }
.book .best th.n { color: #00b400; } .book .best th.r { color: #f04040; }
.book td { width: 77px; text-align: right; }
.book td + td { width: 80px; }
.book tr td.d, .book tr.best td.d { width: auto; padding-right: 4px; font: 14px/20px var(--song); }
.tape { display: flex; height: 166px; padding-top: 1px; }
.tape table { flex: 1; font-size: 12px; height: 168px; }
.tape tr { height: 21px; }
.tape th { width: 33px; text-align: right; color: #f4f4f4; font-size: 13px; }
.tape td { text-align: right; width: 66px; }
.tape td.p { width: 45px; }
.tape td:last-child { width: auto; }
.scroll { display: flex; flex-direction: column; width: 16px; margin: 0 1px 0 2px; border: 1px solid #3a3a3a; }
.scroll .up, .scroll .down { height: 15px; border-bottom: 1px solid #3a3a3a; }
.scroll .down { border: solid #3a3a3a; border-width: 1px 0 0; }
.scroll .up::after { content: ""; display: block; margin: 5px 0 0 3px; width: 0; border: 4px solid transparent; border-bottom: 6px solid #444; border-top: 0; }
.scroll .down::after { content: ""; display: block; margin: 4px 0 0 3px; width: 0; border: 4px solid transparent; border-top: 6px solid #444; border-bottom: 0; }
.scroll .thumb { height: 30px; margin-top: auto; border-radius: 4px; background: repeating-linear-gradient(#aaa 0 1px, transparent 1px 3px) center / 8px 10px no-repeat, #2e2e2e; }
.qtabs { display: flex; align-items: center; height: 17px; padding-left: 2px; }
.ar { display: flex; align-items: center; justify-content: center; width: 14px; height: 15px; margin-right: 1px; border: 1px solid #c00; }
.qt { position: relative; width: 26px; height: 16px; font-size: 13px; line-height: 15px; color: #f0f0f0; text-align: center; }
.qt svg { position: absolute; left: -2px; top: 0; }

.hbar { height: 6px; margin: 2px 3px 0 -1px; background: #464748; }
.account { display: flex; align-items: center; gap: 17px; height: 26px; padding: 0 9px 0 2px; }
.account .name { margin-right: -4px; }
.acts { display: flex; align-items: center; gap: 6px; margin-left: auto; }
.acts button { width: 20px; height: 20px; border: 1px solid #4a4b4d; border-radius: 4px; background: var(--dark); line-height: 17px; }
.acts > svg { margin-left: 4px; }
.acts .tri { margin-left: 1px; }

.dock { display: flex; flex: 1; min-height: 0; padding: 1px 407px 0 0; }
.dmenu { width: 93px; background: var(--dark); line-height: 24px; }
.dmenu li { display: flex; align-items: center; padding-left: 22px; }
.dmenu .plus { margin: 0 7px 0 -16px; }
.order { display: flex; flex-direction: column; width: 235px; }
.fields { flex: 1; padding: 11px 0 0 5px; font: 13px/16px "Noto Sans CJK SC", sans-serif; }
.row { display: flex; align-items: center; height: 29px; }
.row:first-child { height: 24px; }
.order input:not([type=checkbox]), select { height: 23px; padding: 0 2px 2px; border: 2px solid #4d4d4f; border-radius: 3px; background: var(--dark); color: #eee; font: 13px/16px "Noto Sans CJK SC", sans-serif; outline: 0; }
.order input.code { width: 77px; }
.order input.wide, .sel.wide { width: 97px; flex: none; }
.order input.num { width: 66px; }
.order input.bold, .auto select { font-weight: 700; }
.lk { display: flex; align-items: center; justify-content: center; width: 17px; height: 20px; margin: 0 3px 0 5px; border: 1px solid #4d4d4f; border-radius: 4px; background: var(--dark); }
.more { width: 23px; height: 23px; margin-right: 7px; border: 1px solid #4d4d4f; border-radius: 4px; background: var(--dark); }
.sel { position: relative; display: block; }
.sel select { appearance: none; width: 100%; display: block; }
.auto { width: 83px; flex: none; }
.sel::after { content: ""; position: absolute; right: 2px; top: 2px; width: 16px; height: 19px; pointer-events: none; background: linear-gradient(#ccc, #ccc) 6px 8px / 5px 1px no-repeat, linear-gradient(#ccc, #ccc) 7px 9px / 3px 1px no-repeat, linear-gradient(#ccc, #ccc) 8px 10px / 1px 1px no-repeat, #333436; }
.row > label { width: 34px; padding-left: 4px; flex: none; font-size: 12px; }
.spin { display: flex; flex-direction: column; gap: 1px; margin-left: 3px; }
.spin button { width: 17px; height: 11px; border: 1px solid #333537; background: var(--dark); color: #777; font: 8px/9px "DejaVu Sans", sans-serif; }
.limits { justify-content: space-between; height: 20px; padding-right: 14px; }
.limits span { font-size: 12px; }
.limits button { width: 40px; height: 18px; border: 1px solid #4d4d4f; border-radius: 4px; background: var(--dark); font-size: 12px; line-height: 14px; }
.trade { height: 62px; gap: 11px; }
.checks { display: flex; flex-direction: column; gap: 2px; width: 38px; margin-right: -1px; padding-top: 6px; font-size: 12px; }
.checks label { display: flex; align-items: center; gap: 3px; }
.checks input { appearance: none; flex: none; width: 11px; height: 11px; margin: 0; border: 1px solid #666; border-radius: 2px; background: #2a2628; }
.deal { display: flex; flex-direction: column; align-items: center; width: 78px; height: 60px; padding: 5px 4px 0; border: 1px solid #4d4d4f; border-radius: 4px; background: var(--dark); }
.deal b { font: bold 15px/18px "Noto Sans CJK SC", sans-serif; }
.deal i { width: 100%; height: 1px; margin: 6px 0 2px; background: #aaa; }
.deal strong { font: bold 19px/24px "Noto Sans CJK SC", sans-serif; }
.red { color: #f00; } .green { color: #0f0; }
.otabs { display: flex; height: 23px; margin-bottom: 2px; border-top: 1px solid #4d4d4f; }
.nav { width: 19px; padding-right: 4px; font: 10px/20px "DejaVu Sans", sans-serif; color: #ccc; }
.nav.end { margin: 0 3px 0 auto; }
.ot { width: 50px; height: 20px; background: var(--dark); line-height: 17px; padding-left: 12px; border-right: 1px solid #333; border-radius: 0 0 4px 4px; }
.ot.act { width: 67px; padding-left: 34px; background: #4d4d4f; clip-path: polygon(0 0, 100% 0, 100% 100%, 32% 100%); border-radius: 0; }
.fold { width: 10px; display: flex; align-items: center; justify-content: center; }
.positions { display: flex; flex-direction: column; flex: 1; min-width: 0; background: var(--dark); }
.pbtns { display: flex; gap: 6px; height: 21px; padding-left: 5px; background: #24272c; }
.pbtns button { width: 69px; height: 21px; border: 1px solid #3f4143; border-radius: 4px 4px 0 0; background: var(--dark); font-size: 13px; line-height: 19px; }
.pbtns .short { width: 39px; }
.positions table { width: 100%; table-layout: fixed; }
.positions th { height: 24px; padding: 0 3px; border: 1px solid var(--line); background: #24272c; text-align: right; }
.positions th:first-child, .positions th:nth-child(2) { text-align: left; }
.blank { flex: 1; }
.acct { height: 23px; margin-bottom: 2px; border: 1px solid #4d4d4f; background: #2c2b2c; display: flex; }
.acct button { width: 78px; border-right: 1px solid #555; background: #242324; color: #f08a10; font-size: 14px; }

.markets { display: flex; align-items: center; height: 25px; padding-top: 1px; background: #24272c; overflow: hidden; }
.markets a { flex: none; height: 21px; padding: 0 11px 0 9px; border-left: 1px solid #4b4d50; line-height: 20px; }
.markets a:first-child { padding-left: 11px; }
.markets a.latin { padding-left: 10px; }
.markets a i { display: inline-block; margin: 0 0 1px 6px; border: 3px solid transparent; border-top-color: #ccc; border-bottom: 0; }
.inds div { display: flex; align-items: center; height: 25px; background: var(--dark); border-radius: 0 4px 4px 0; }
.inds a { padding: 0 11px 0 9px; }
.inds a:first-child { padding: 0 13px 0 0; border: 0; }
.indexes { height: 16px; border-top: 1px solid #5a5b5d; background: #24272c; display: grid; grid-template-columns: 334px 390px 387px 1fr; font: 16px/20px var(--song); overflow: hidden; }
.indexes div { display: flex; gap: 5px; }
.indexes div:first-child { padding-left: 8px; }
.indexes em { font-style: normal; color: #0e0; font-size: 15px; }

.popup { position: absolute; right: 0; bottom: 0; width: 399px; height: 278px; border: solid #5c5d5f; border-width: 2px 0 0 2px; background: #24272c; }
.popup h2 { display: flex; align-items: center; gap: 9px; height: 24px; padding-left: 3px; border-bottom: 1px solid #4b4c4e; font-size: 12px; line-height: 18px; }
.popup h2 span { flex: 1; }
.log { display: flex; flex-direction: column; gap: 12px; padding: 11px 0 0 2px; font: 12px/12px var(--song); }
</style>
